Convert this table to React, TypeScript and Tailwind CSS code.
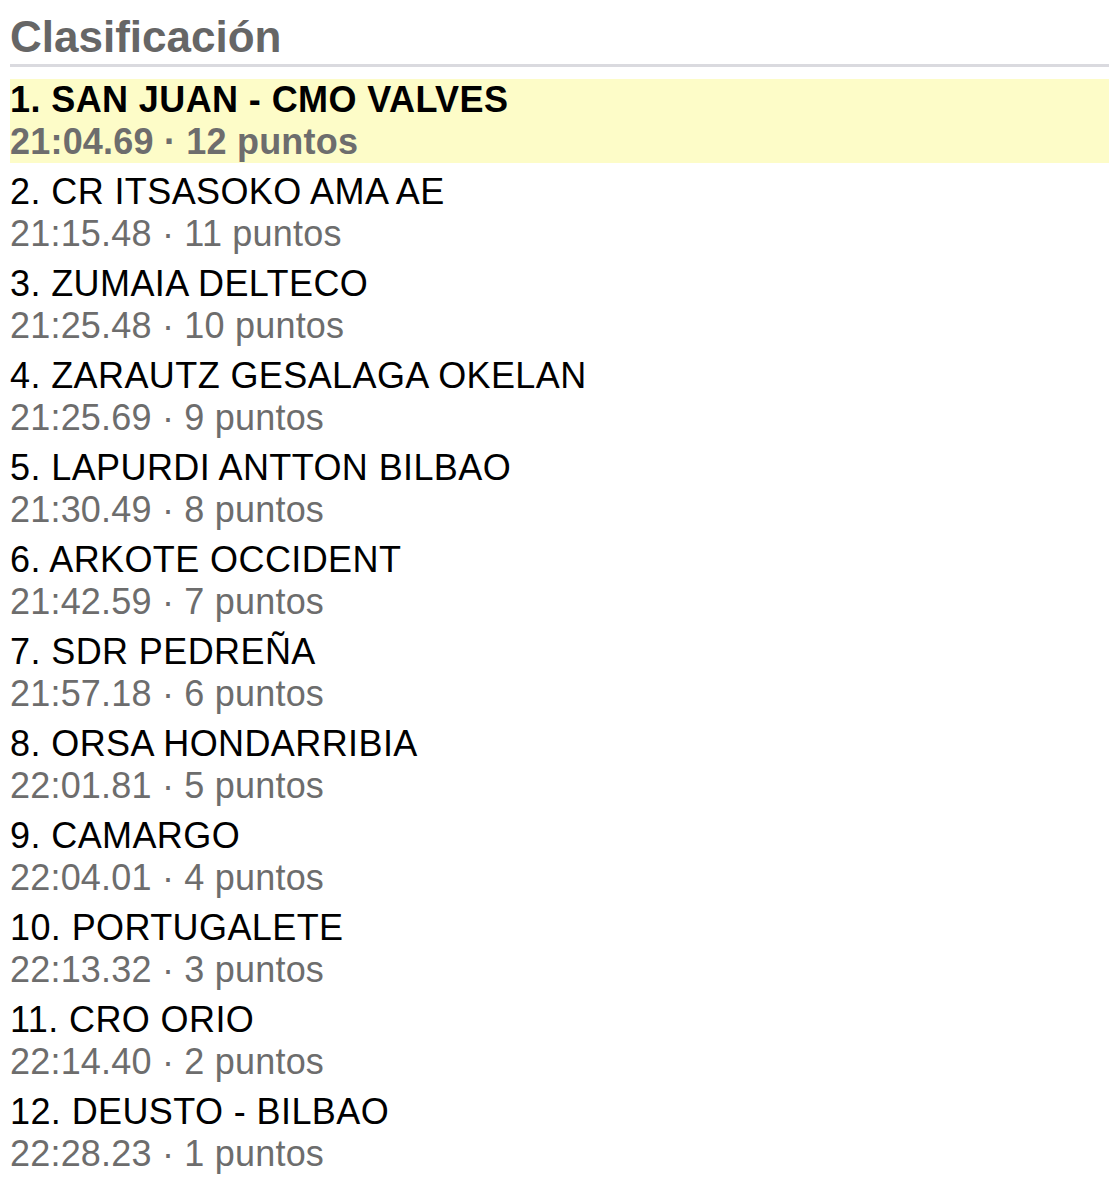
const rows = [
  { name: 'SAN JUAN - CMO VALVES', time: '21:04.69', pts: 12 },
  { name: 'CR ITSASOKO AMA AE', time: '21:15.48', pts: 11 },
  { name: 'ZUMAIA DELTECO', time: '21:25.48', pts: 10 },
  { name: 'ZARAUTZ GESALAGA OKELAN', time: '21:25.69', pts: 9 },
  { name: 'LAPURDI ANTTON BILBAO', time: '21:30.49', pts: 8 },
  { name: 'ARKOTE OCCIDENT', time: '21:42.59', pts: 7 },
  { name: 'SDR PEDREÑA', time: '21:57.18', pts: 6 },
  { name: 'ORSA HONDARRIBIA', time: '22:01.81', pts: 5 },
  { name: 'CAMARGO', time: '22:04.01', pts: 4 },
  { name: 'PORTUGALETE', time: '22:13.32', pts: 3 },
  { name: 'CRO ORIO', time: '22:14.40', pts: 2 },
  { name: 'DEUSTO - BILBAO', time: '22:28.23', pts: 1 },
];

export default function App() {
  return (
    <div className="w-[1118px] min-h-[1200px] bg-white pl-[10px] pr-[9px] pt-[10px] font-['Liberation_Sans',Arial,sans-serif]">
      <h1 className="text-[44px] leading-[54px] font-bold text-[#666666]">Clasificación</h1>
      <div className="h-[3px] bg-[#dadadf]" />
      <ul className="mt-[12px] flex flex-col gap-[8px]">
        {rows.map((r, i) => {
          const first = i === 0;
          return (
            <li key={r.name} className={first ? 'bg-[#fdfcc8] font-bold' : ''}>
              <div className="text-[36px] leading-[42px] tracking-[0.4px] text-black">
                {i + 1}. {r.name}
              </div>
              <div className="text-[36px] leading-[42px] tracking-[0.2px] text-[#6d6d6d]">
                {r.time} · {r.pts} puntos
              </div>
            </li>
          );
        })}
      </ul>
    </div>
  );
}
